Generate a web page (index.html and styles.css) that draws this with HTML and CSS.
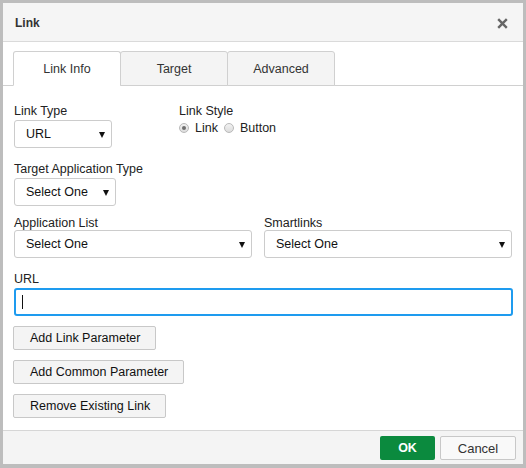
FILE: index.html
```html
<!DOCTYPE html>
<html lang="en">
<head>
    <meta charset="UTF-8">
    <meta name="viewport" content="width=device-width, initial-scale=1.0">
    <title>Link</title>
    <link rel="stylesheet" href="styles.css">
</head>
<body>

    <div class="dialog">
        <div class="dialog-header">
            <h2>Link</h2>
            <span class="close">
                <svg width="11" height="11" viewBox="0 0 11 11">
                    <path d="M1.2 1.2 L9.8 9.8 M9.8 1.2 L1.2 9.8" stroke="#666" stroke-width="2.4" stroke-linecap="butt"/>
                </svg>
            </span>
        </div>

        <div class="tabs">
            <div class="tab active">Link Info</div>
            <div class="tab">Target</div>
            <div class="tab">Advanced</div>
        </div>

        <div class="dialog-body">
            <div class="row row-first">
                <div class="field field-type">
                    <label>Link Type</label>
                    <div class="select select-small">URL<span class="arrow"></span></div>
                </div>
                <div class="field">
                    <label>Link Style</label>
                    <div class="radios">
                        <span class="radio checked"></span><span class="radio-text">Link</span>
                        <span class="radio"></span><span class="radio-text">Button</span>
                    </div>
                </div>
            </div>

            <div class="row row-target">
                <div class="field">
                    <label>Target Application Type</label>
                    <div class="select select-medium">Select One<span class="arrow"></span></div>
                </div>
            </div>

            <div class="row row-lists">
                <div class="field field-apps">
                    <label>Application List</label>
                    <div class="select select-apps">Select One<span class="arrow"></span></div>
                </div>
                <div class="field">
                    <label>Smartlinks</label>
                    <div class="select select-smart">Select One<span class="arrow"></span></div>
                </div>
            </div>

            <div class="row row-url">
                <div class="field field-url">
                    <label>URL</label>
                    <div class="url-input"><span class="caret"></span></div>
                </div>
            </div>

            <div class="actions">
                <button class="button">Add Link Parameter</button>
                <button class="button">Add Common Parameter</button>
                <button class="button">Remove Existing Link</button>
            </div>
        </div>

        <div class="dialog-footer">
            <button class="button-ok">OK</button>
            <button class="button-cancel">Cancel</button>
        </div>
    </div>

</body>
</html>
```

FILE: styles.css
```css
* {
    margin: 0;
    padding: 0;
    box-sizing: border-box;
    font-family: 'Liberation Sans', Arial, sans-serif;
}

body {
    background: #bdbdbd;
    padding: 3px;
    width: 526px;
    height: 468px;
    overflow: hidden;
}

.dialog {
    background: white;
    width: 520px;
    height: 461px;
    display: flex;
    flex-direction: column;
}

.dialog-header {
    height: 39px;
    background: #f5f5f5;
    border-bottom: 1px solid #dadada;
    display: flex;
    align-items: center;
    justify-content: space-between;
    padding: 0 15px 0 12px;
}

.dialog-header h2 {
    font-size: 12px;
    font-weight: bold;
    color: #333;
    padding-top: 1px;
}

.close {
    display: flex;
    padding-top: 2px;
}

.tabs {
    display: flex;
    padding: 9px 0 0 10px;
    border-bottom: 1px solid #d0d0d0;
}

.tab {
    width: 108px;
    height: 35px;
    margin-left: -1px;
    margin-bottom: -1px;
    border: 1px solid #d0d0d0;
    border-radius: 3px 3px 0 0;
    background: #f4f4f4;
    color: #333;
    font-size: 12.5px;
    display: flex;
    align-items: center;
    justify-content: center;
    padding-top: 1px;
}

.tab:first-child {
    margin-left: 0;
}

.tab.active {
    background: white;
    border-bottom-color: white;
}

.dialog-body {
    flex: 1;
    padding: 18px 10px 0 11px;
}

.row {
    display: flex;
}

.row-target {
    margin-top: 14px;
}

.row-lists {
    margin-top: 10px;
}

.row-url {
    margin-top: 14px;
}

.field label {
    display: block;
    font-size: 12.5px;
    line-height: 14px;
    color: #222;
    margin-bottom: 2px;
}

.row-lists .field label {
    margin-bottom: 0;
}

.field-type {
    width: 165px;
}

.field-apps {
    width: 250px;
}

.field-url {
    width: 100%;
}

.select {
    position: relative;
    height: 28px;
    border: 1px solid #cccccc;
    border-radius: 3px;
    background: white;
    font-size: 12.5px;
    color: #111;
    line-height: 26px;
    padding-left: 11px;
}

.select-small {
    width: 98px;
}

.select-medium {
    width: 102px;
}

.select-apps {
    width: 238px;
}

.select-smart {
    width: 248px;
}

.arrow {
    position: absolute;
    right: 6px;
    top: 11px;
    width: 0;
    height: 0;
    border-left: 3px solid transparent;
    border-right: 3px solid transparent;
    border-top: 6px solid #111;
}

.radios {
    display: flex;
    align-items: center;
    height: 16px;
    margin-top: 2px;
    font-size: 12.5px;
    color: #222;
}

.radio {
    width: 10px;
    height: 10px;
    border-radius: 50%;
    border: 1px solid #b9b9b9;
    background: linear-gradient(#f2f2f2, #dcdcdc);
    display: flex;
    align-items: center;
    justify-content: center;
    margin-right: 6px;
}

.radio.checked::after {
    content: '';
    width: 4px;
    height: 4px;
    border-radius: 50%;
    background: #6f6f6f;
}

.radio-text {
    margin-right: 6px;
}

.url-input {
    height: 28px;
    width: 100%;
    border: 2px solid #1e9bef;
    border-radius: 3px;
    display: flex;
    align-items: center;
    padding-left: 6px;
}

.caret {
    width: 1px;
    height: 14px;
    background: #111;
}

.actions {
    margin-top: 10px;
    display: flex;
    flex-direction: column;
    align-items: flex-start;
    gap: 10px;
    margin-left: -1px;
}

.button {
    height: 24px;
    padding: 0 15px 0 16px;
    background: #f4f4f4;
    border: 1px solid #c8c8c8;
    border-radius: 2px;
    font-size: 12.5px;
    color: #111;
}

.dialog-footer {
    height: 34px;
    border-top: 1px solid #d6d6d6;
    background: #f4f4f4;
    display: flex;
    justify-content: flex-end;
    align-items: flex-start;
    gap: 5px;
    padding: 5px 7px 0 0;
}

.button-ok {
    width: 55px;
    height: 24px;
    background: #0b8a3e;
    border: none;
    border-radius: 2px;
    color: white;
    font-size: 12.5px;
    font-weight: bold;
}

.button-cancel {
    width: 76px;
    height: 24px;
    background: #f9f9f9;
    border: 1px solid #c8c8c8;
    border-radius: 2px;
    color: #333;
    font-size: 13px;
}
```
